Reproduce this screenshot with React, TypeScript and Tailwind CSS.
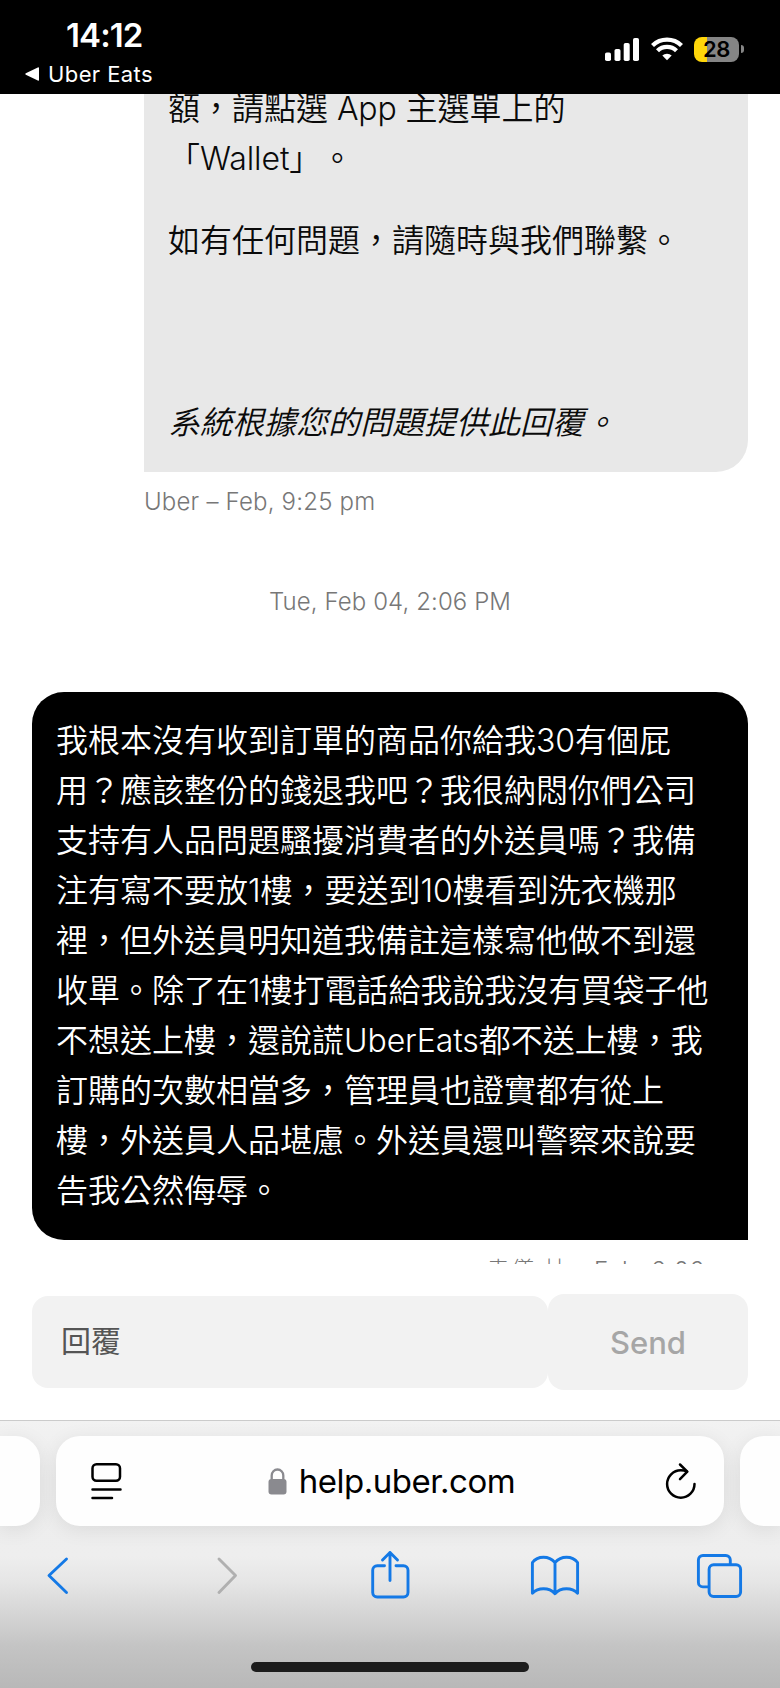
import type { ReactNode } from "react";

const replyLines = [
  "我根本沒有收到訂單的商品你給我30有個屁",
  "用？應該整份的錢退我吧？我很納悶你們公司",
  "支持有人品問題騷擾消費者的外送員嗎？我備",
  "注有寫不要放1樓，要送到10樓看到洗衣機那",
  "裡，但外送員明知道我備註這樣寫他做不到還",
  "收單。除了在1樓打電話給我說我沒有買袋子他",
  "不想送上樓，還說謊UberEats都不送上樓，我",
  "訂購的次數相當多，管理員也證實都有從上",
  "樓，外送員人品堪慮。外送員還叫警察來說要",
  "告我公然侮辱。",
];

function Latin({ children }: { children: ReactNode }) {
  return <span className="font-['Inter',sans-serif] font-light tracking-[-0.1px]">{children}</span>;
}

function MixedText({ text }: { text: string }) {
  return text
    .split(/([A-Za-z0-9]+)/)
    .map((part, index) => (index % 2 ? <Latin key={index}>{part}</Latin> : part));
}

function StatusBar() {
  return (
    <header className="flex h-[94px] shrink-0 justify-between bg-black font-['Inter',sans-serif] text-white">
      <div className="flex flex-col pl-[25px] pt-[17px]">
        <div className="pl-[41px] text-[33px] font-semibold leading-[36px] tracking-[-0.9px]">14:12</div>
        <div className="mt-[7px] flex items-center gap-[8px] text-[22px] leading-[28px] tracking-[0.4px]">
          <svg width="15" height="14" viewBox="0 0 15 14" fill="currentColor">
            <path d="M14 1v12a.8.8 0 0 1-1.200.6L.8 7.700a.8.8 0 0 1 0-1.400L12.800.4A.8.8 0 0 1 14 1z" />
          </svg>
          <span>Uber Eats</span>
        </div>
      </div>
      <div className="mt-[36px] flex h-[26px] gap-[11px] pr-[36px]">
        <svg width="35" height="26" viewBox="0 0 35 26" fill="currentColor">
          <rect x="0" y="16.500" width="6" height="8.500" rx="1.800" />
          <rect x="9.500" y="13" width="6" height="12" rx="1.800" />
          <rect x="18.700" y="7" width="6" height="18" rx="1.800" />
          <rect x="28" y="2" width="6" height="23" rx="1.800" />
        </svg>
        <svg width="32" height="26" viewBox="0 0 32 26" fill="none" stroke="currentColor" strokeWidth="4.300">
          <path d="M1.500 9.500a21 21 0 0 1 29 0" />
          <path d="M6.500 14.800a13.600 13.600 0 0 1 19 0" />
          <path d="M16 24.300l-4.700-4.700a6.800 6.800 0 0 1 9.400 0z" fill="currentColor" stroke="none" />
        </svg>
        <div className="flex items-center gap-[2px]">
          <div className="flex h-[25px] w-[45px] items-center justify-center rounded-[8px] bg-[linear-gradient(90deg,#ffd60a_28%,#858585_28%)] text-[22px] font-semibold leading-none tracking-[-0.5px] text-black">
            28
          </div>
          <div className="h-[8px] w-[3px] rounded-r-full bg-[#858585]" />
        </div>
      </div>
    </header>
  );
}

function Conversation() {
  return (
    <main className="flex h-[1170px] shrink-0 flex-col overflow-hidden px-8 text-[32px] leading-[50px]">
      <section className="ml-[112px] h-[378px] shrink-0 rounded-br-[32px] bg-[#e8e8e8] px-6 font-[350] text-[#0a0a0a]">
        <div className="-mt-[10px] whitespace-nowrap">
          <p>額，請點選 <Latin>App</Latin> 主選單上的</p>
          <p>「<Latin>Wallet</Latin>」。</p>
          <p className="mt-[32px]">如有任何問題，請隨時與我們聯繫。</p>
          <p className="mt-[132px] italic">系統根據您的問題提供此回覆。</p>
        </div>
      </section>
      <p className="ml-[112px] mt-[14px] font-['Inter',sans-serif] text-[24px] font-light leading-[32px] tracking-[0.2px] text-[#777]">Uber – Feb, 9:25 pm</p>
      <p className="mt-[68px] text-center font-['Inter',sans-serif] text-[24px] font-light leading-[32px] tracking-[0.1px] text-[#777]">Tue, Feb 04, 2:06 PM</p>
      <section className="mt-[74px] shrink-0 rounded-[32px] rounded-br-none bg-black px-6 py-6 font-[350] text-white">
        {replyLines.map((line) => (
          <p key={line} className="whitespace-nowrap"><MixedText text={line} /></p>
        ))}
      </section>
      <p className="mt-[15px] text-right font-['Inter','Noto_Sans_CJK_TC',sans-serif] text-[24px] font-light leading-[32px] tracking-[0.5px] text-[#777]">袁儀 林 – Feb, 2:06 pm</p>
    </main>
  );
}

function ReplyBar() {
  return (
    <form className="flex h-[156px] shrink-0 items-center px-8">
      <div className="flex h-[92px] w-[516px] items-center rounded-[16px] bg-[#f2f2f2] px-[29px] text-[30px] leading-none text-[#555]">回覆</div>
      <div className="flex h-[96px] w-[200px] items-center justify-center rounded-[16px] bg-[#f2f2f2] pt-[2px] font-['Inter',sans-serif] text-[31px] font-medium text-[#a6a6a6]">
        Send
      </div>
    </form>
  );
}

function ToolIcon({ children }: { children: ReactNode }) {
  return (
    <svg width="56" height="56" viewBox="0 0 56 56" fill="none" stroke="#1479e6" strokeWidth="2.900" strokeLinecap="round" strokeLinejoin="round">
      {children}
    </svg>
  );
}

function BrowserBar() {
  return (
    <footer className="flex h-[268px] shrink-0 flex-col overflow-hidden border-t border-[#cbcbcb] bg-[linear-gradient(180deg,#f2f2f2_0px,#ededed_60px,#eeeeee_135px,#e6e6e6_160px,#d4d4d4_195px,#c4c4c4_225px,#b8b8b8_267px)]">
      <div className="mt-[15px] flex h-[90px] shrink-0 gap-4">
        <div className="w-[40px] rounded-r-[24px] bg-[#fefefe] shadow-[0_4px_20px_rgba(0,0,0,0.08)]" />
        <div className="flex w-[668px] items-center rounded-[24px] bg-[#fefefe] pl-[34px] pr-[27px] shadow-[0_4px_20px_rgba(0,0,0,0.08)]">
          <svg width="32" height="38" viewBox="0 0 32 38" fill="none" stroke="#000" strokeWidth="2.500" strokeLinecap="round">
            <rect x="2.500" y="2.300" width="27.500" height="16.500" rx="4" />
            <path d="M2.500 27.500h28M2.500 36h19.500" />
          </svg>
          <div className="flex flex-1 items-center justify-center gap-[12px] pr-[2px]">
            <svg width="19" height="27" viewBox="0 0 19 27" fill="#8a8a8f">
              <rect x="0.500" y="11" width="18" height="15.500" rx="3" />
              <path d="M3.700 12V7.500a5.800 6 0 0 1 11.600 0V12" fill="none" stroke="#8a8a8f" strokeWidth="2.300" />
            </svg>
            <span className="font-['Inter',sans-serif] text-[33px] leading-none tracking-[-0.5px] text-black">help.uber.com</span>
          </div>
          <svg width="34" height="38" viewBox="0 0 34 38" fill="none" stroke="#000" strokeWidth="2.500" strokeLinecap="round" strokeLinejoin="round">
            <path d="M31.500 22a13.700 13.700 0 1 1-13.700-13.700c2.300 0 4.300.4 6.200 1.300" />
            <path d="M17 2.500l7.300 7.200-7.300 7.500" />
          </svg>
        </div>
        <div className="w-[40px] rounded-l-[24px] bg-[#fefefe] shadow-[0_4px_20px_rgba(0,0,0,0.08)]" />
      </div>
      <nav className="mt-[22px] flex justify-between px-[32px]">
        <ToolIcon><path d="M34.500 11L17 27.500 34.500 44.500" /></ToolIcon>
        <ToolIcon><path d="M22 11l16.500 16.500L22 44.500" stroke="#b0b0b0" /></ToolIcon>
        <ToolIcon>
          <path d="M22.500 17.700h-7.300a4.500 4.500 0 0 0-4.500 4.500v22.300a4.500 4.500 0 0 0 4.500 4.500h26.300a4.500 4.500 0 0 0 4.500-4.500V22.200a4.500 4.500 0 0 0-4.500-4.500h-7.500" />
          <path d="M28 32.500V4.500M20.500 12L28 4.500l7.500 7.500" />
        </ToolIcon>
        <ToolIcon>
          <path d="M28 14.500C25 11 20.800 9.200 16.500 9.200S8 11 5.400 14.500V45.300c2.800-2.900 6.700-4.500 11.100-4.500s8.500 1.600 11.500 4.900c3-3.300 7.100-4.900 11.500-4.900s8.300 1.600 11.100 4.500V14.500C48 11 43.800 9.200 39.500 9.200S31 11 28 14.500zM28 14.500v31" />
        </ToolIcon>
        <ToolIcon>
          <rect x="17.100" y="16.800" width="31.500" height="31.700" rx="4.500" />
          <path d="M16.500 38.900h-5.600a4.500 4.500 0 0 1-4.500-4.500V12a4.500 4.500 0 0 1 4.500-4.500h22.900a4.500 4.500 0 0 1 4.500 4.500v4" strokeLinecap="butt" />
        </ToolIcon>
      </nav>
      <div className="mx-auto mt-[58px] h-[10px] w-[278px] rounded-full bg-[#1c1c1c]" />
    </footer>
  );
}

export default function App() {
  return (
    <div lang="zh-Hant" className="flex h-[1688px] w-[780px] flex-col overflow-hidden bg-white font-['Liberation_Sans','Noto_Sans_CJK_TC',sans-serif] [text-spacing-trim:space-all]">
      <StatusBar />
      <Conversation />
      <ReplyBar />
      <BrowserBar />
    </div>
  );
}
